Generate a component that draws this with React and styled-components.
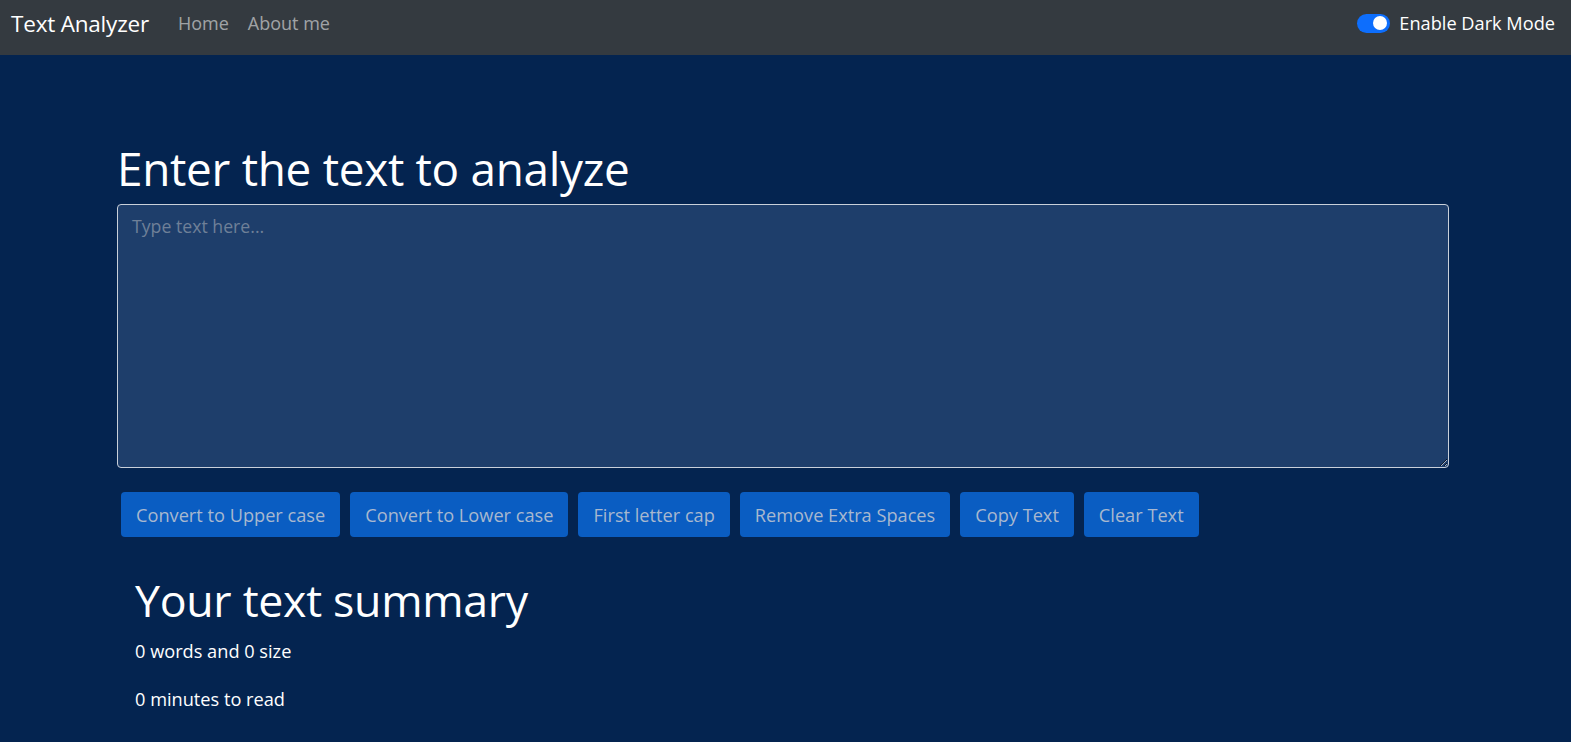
import React, { useState } from 'react'
import styled, { createGlobalStyle } from 'styled-components'

const colors = {
  nav: '#343a40',
  page: '#042450',
  field: '#1e3e6b',
  button: '#0a5dc2',
  buttonText: '#a8b8cf',
  white: '#ffffff',
  muted: 'rgba(255,255,255,0.55)',
  toggle: '#0d6efd',
}

const GlobalStyle = createGlobalStyle`
  html, body {
    margin: 0;
    padding: 0;
    background: ${colors.page};
    font-family: "Open Sans", "Noto Sans", sans-serif;
  }
  * { box-sizing: border-box; }
`

// Styles

const Page = styled.div`
  min-height: 742px;
  background: ${colors.page};
  color: ${colors.white};
`

const NavBar = styled.nav`
  height: 55px;
  background: ${colors.nav};
  display: flex;
  align-items: center;
  padding: 0 16px 9px 11px;
`

const Brand = styled.a`
  font-size: 22.5px;
  color: ${colors.white};
  text-decoration: none;
  margin-right: 29px;
  letter-spacing: -0.2px;
`

const NavLinks = styled.ul`
  display: flex;
  gap: 19px;
  list-style: none;
  margin: 0;
  padding: 0;
  flex: 1;
`

const NavLink = styled.a`
  color: ${colors.muted};
  font-size: 18px;
  text-decoration: none;
`

const ToggleLabel = styled.label`
  display: flex;
  align-items: center;
  gap: 9px;
  font-size: 18.2px;
  color: ${colors.white};
`

const Switch = styled.span`
  width: 33px;
  height: 19px;
  border-radius: 10px;
  background: ${colors.toggle};
  display: flex;
  align-items: center;
  justify-content: ${p => (p.$on ? 'flex-end' : 'flex-start')};
  padding: 0 3px;
  &::after {
    content: '';
    width: 14px;
    height: 14px;
    border-radius: 50%;
    background: ${colors.white};
  }
`

const Main = styled.main`
  padding: 86px 0 0 117px;
`

const Section = styled.section`
  width: 1332px;
`

const Heading = styled.h1`
  font-size: 45.9px;
  font-weight: 400;
  line-height: 1.2;
  margin: 0 0 8px 0;
  letter-spacing: -0.3px;
`

const TextArea = styled.textarea`
  display: block;
  width: 100%;
  height: 264px;
  background: ${colors.field};
  border: 1px solid #c9d0da;
  border-radius: 4px;
  color: ${colors.white};
  font-family: inherit;
  font-size: 17.7px;
  padding: 9px 14px;
  resize: vertical;
  &::placeholder {
    color: #6f8098;
  }
`

const ButtonRow = styled.div`
  display: flex;
  gap: 10px;
  padding: 24px 0 0 4px;
`

const Button = styled.button`
  height: 45px;
  padding: 0 15px;
  background: ${colors.button};
  color: ${colors.buttonText};
  border: none;
  border-radius: 4px;
  font-family: inherit;
  font-size: 18.2px;
  cursor: pointer;
`

const Summary = styled.div`
  padding: 36px 0 0 18px;
`

const SubHeading = styled.h2`
  font-size: 44.7px;
  font-weight: 400;
  line-height: 1.2;
  margin: 0 0 12px 0;
  letter-spacing: -0.3px;
`

const Stat = styled.p`
  font-size: 18.2px;
  margin: 0 0 23px 0;
  line-height: 1.4;
`

// JSX

const actions = [
  'Convert to Upper case',
  'Convert to Lower case',
  'First letter cap',
  'Remove Extra Spaces',
  'Copy Text',
  'Clear Text',
]

export default function App() {
  const [text, setText] = useState('')
  const words = text.split(/\s+/).filter(Boolean).length

  return (
    <Page>
      <GlobalStyle />
      <NavBar>
        <Brand href="#">Text Analyzer</Brand>
        <NavLinks>
          <li><NavLink href="#">Home</NavLink></li>
          <li><NavLink href="#">About me</NavLink></li>
        </NavLinks>
        <ToggleLabel>
          <Switch $on />
          Enable Dark Mode
        </ToggleLabel>
      </NavBar>
      <Main>
        <Section>
          <Heading>Enter the text to analyze</Heading>
          <TextArea
            placeholder="Type text here..."
            value={text}
            onChange={e => setText(e.target.value)}
          />
          <ButtonRow>
            {actions.map(a => (
              <Button key={a}>{a}</Button>
            ))}
          </ButtonRow>
          <Summary>
            <SubHeading>Your text summary</SubHeading>
            <Stat>{words} words and {text.length} size</Stat>
            <Stat>{0.008 * words} minutes to read</Stat>
          </Summary>
        </Section>
      </Main>
    </Page>
  )
}
